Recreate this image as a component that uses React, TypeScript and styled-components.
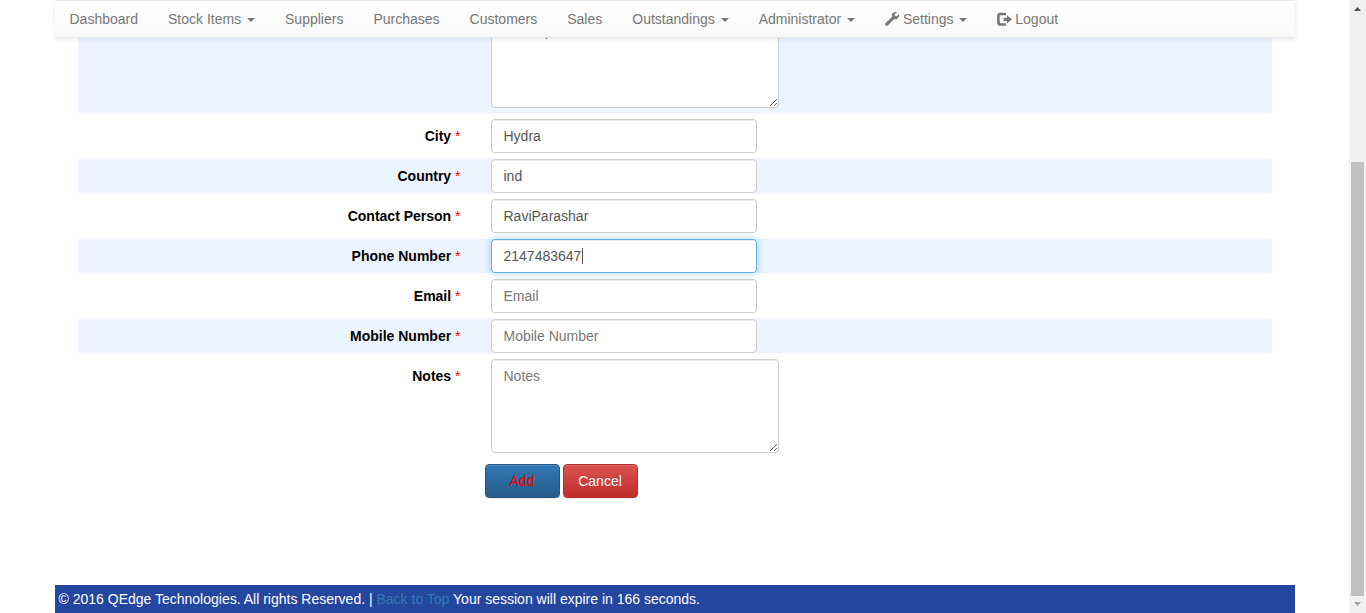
import React from "react";
import styled, { createGlobalStyle } from "styled-components";

const GlobalStyle = createGlobalStyle`
  *, *::before, *::after { box-sizing: border-box; }
  body {
    margin: 0;
    background: #fff;
    color: #000;
    font: 14px/20px "Liberation Sans", Arial, sans-serif;
  }
`;

const Shell = styled.div`
  display: flex;
  height: 100vh;
  overflow: hidden;
`;

const Viewport = styled.div`
  flex: 1;
  min-width: 0;
  overflow: hidden;
`;

const Page = styled.div`
  position: relative;
  display: flex;
  flex-direction: column;
  max-width: 1240px;
  min-height: 100%;
  margin: 0 auto;
`;

const NavBar = styled.nav`
  position: absolute;
  top: 0;
  left: 0;
  right: 0;
  z-index: 2;
  display: flex;
  border: solid #e7e7e7;
  border-width: 1px 0;
  background: linear-gradient(to bottom, #fff 0%, #f8f8f8 100%);
  box-shadow: 0 1px 5px rgba(0, 0, 0, 0.1);
`;

const NavLink = styled.a`
  height: 36px;
  padding: 8px 15px;
  color: #777;
  white-space: nowrap;
  text-decoration: none;
  &:hover { color: #333; }
`;

const Caret = styled.span`
  display: inline-block;
  margin-left: 2px;
  vertical-align: middle;
  border-top: 4px solid currentColor;
  border-right: 4px solid transparent;
  border-left: 4px solid transparent;
`;

const Glyph = styled.svg`
  width: 14px;
  height: 14px;
  overflow: visible;
  vertical-align: -2px;
  fill: currentColor;
`;

const Form = styled.form`
  display: flex;
  flex: 1;
  flex-direction: column;
  gap: 6px;
  padding: 14px 23px 87px;
`;

const Row = styled.div<{ $shaded?: boolean; $tall?: boolean }>`
  display: grid;
  grid-template-columns: 1fr 2fr;
  padding-bottom: ${(p) => (p.$tall ? "5px" : "0")};
  background: ${(p) => (p.$shaded ? "#ecf5ff" : "transparent")};
`;

const Label = styled.label`
  padding: 7px 15px 0 0;
  font-weight: bold;
  text-align: right;
`;

const Star = styled.span`
  color: #f00;
  font-weight: normal;
`;

const Cell = styled.div`
  position: relative;
  display: flex;
  grid-column: 2;
  padding-left: 15px;
`;

const Input = styled.input<{ $active?: boolean }>`
  width: 266px;
  height: 34px;
  padding: 6px 12px;
  border: 1px solid ${(p) => (p.$active ? "#66afe9" : "#ccc")};
  border-radius: 4px;
  outline: 0;
  background: #fff;
  color: #555;
  font: inherit;
  box-shadow: inset 0 1px 1px rgba(0, 0, 0, 0.075)
    ${(p) => (p.$active ? ", 0 0 8px rgba(102, 175, 233, 0.6)" : "")};
  &::placeholder { color: #777; }
`;

const TextArea = styled.textarea`
  width: 288px;
  height: 94px;
  padding: 6px 12px;
  border: 1px solid #ccc;
  border-radius: 4px;
  outline: 0;
  background: #fff;
  color: #555;
  font: inherit;
  box-shadow: inset 0 1px 1px rgba(0, 0, 0, 0.075);
  &::placeholder { color: #777; }
`;

const TextCursor = styled.span`
  position: absolute;
  top: 9px;
  left: 106px;
  width: 1px;
  height: 16px;
  background: #555;
`;

const Actions = styled.div`
  display: flex;
  grid-column: 2;
  gap: 3px;
  padding-left: 9px;
`;

const Button = styled.button<{ $danger?: boolean }>`
  width: 75px;
  height: 34px;
  padding: 0;
  border: 1px solid ${(p) => (p.$danger ? "#b92c28" : "#245580")};
  border-radius: 4px;
  background: ${(p) =>
    p.$danger
      ? "linear-gradient(to bottom, #d9534f 0%, #c12e2a 100%)"
      : "linear-gradient(to bottom, #337ab7 0%, #265a88 100%)"};
  color: ${(p) => (p.$danger ? "#fff" : "#f00")};
  font: inherit;
  text-shadow: 0 -1px 0 rgba(0, 0, 0, 0.2);
  box-shadow: inset 0 1px 0 rgba(255, 255, 255, 0.15), 0 1px 1px rgba(0, 0, 0, 0.075);
  cursor: pointer;
`;

const Footer = styled.footer`
  padding: 4px;
  background: #24469f;
  color: #fff;
`;

const FooterLink = styled.a`
  color: #337ab7;
  text-decoration: none;
`;

const Track = styled.div`
  display: flex;
  flex: none;
  flex-direction: column;
  align-items: center;
  width: 17px;
  background: #f1f1f1;
`;

const Arrow = styled.svg<{ $dim?: boolean }>`
  flex: none;
  width: 17px;
  height: 17px;
  fill: ${(p) => (p.$dim ? "#a3a3a3" : "#505050")};
`;

const ThumbSpace = styled.div`
  display: flex;
  flex: 1;
  align-items: flex-end;
`;

const Thumb = styled.div`
  width: 13px;
  height: 75%;
  background: #c1c1c1;
`;

const Wrench = () => (
  <Glyph viewBox="0 0 14 14" aria-hidden="true">
    <path d="M12.300.1 9.700 2.300 10 4 11.700 4.300 14 2C14.400 3.900 13.600 5.800 12.200 6.700 11.200 7.300 10.200 7.300 9.200 7L3 13.300C2.300 14 1.300 14 .7 13.400 0 12.700 0 11.700.7 11L7 4.900C6.600 3.300 7.100 1.700 8.400.7 9.600-.1 11-.3 12.300.1Z" />
  </Glyph>
);

const LogoutGlyph = () => (
  <Glyph viewBox="0 0 14 14" aria-hidden="true">
    <path d="M9 .8v2.500H3.700Q2.700 3.300 2.700 4.300v6Q2.700 11.300 3.700 11.300H9v2.500H3.500Q.1 13.800.1 10.400V4.200Q.1.800 3.500.8Z" />
    <path d="M10 3.200 15 7.300 10 11.400V8.900H6.600V5.700H10Z" />
  </Glyph>
);

type NavItem = { text: string; menu?: boolean; icon?: React.ReactNode };

const navItems: NavItem[] = [
  { text: "Dashboard" },
  { text: "Stock Items", menu: true },
  { text: "Suppliers" },
  { text: "Purchases" },
  { text: "Customers" },
  { text: "Sales" },
  { text: "Outstandings", menu: true },
  { text: "Administrator", menu: true },
  { text: "Settings", menu: true, icon: <Wrench /> },
  { text: "Logout", icon: <LogoutGlyph /> },
];

type Field = {
  id: string;
  label?: string;
  value?: string;
  multiline?: boolean;
  active?: boolean;
};

const fields: Field[] = [
  { id: "address", value: "Ameerpet", multiline: true },
  { id: "city", label: "City", value: "Hydra" },
  { id: "country", label: "Country", value: "ind" },
  { id: "contact", label: "Contact Person", value: "RaviParashar" },
  { id: "phone", label: "Phone Number", value: "2147483647", active: true },
  { id: "email", label: "Email" },
  { id: "mobile", label: "Mobile Number" },
  { id: "notes", label: "Notes", multiline: true },
];

export default function App() {
  return (
    <Shell>
      <GlobalStyle />
      <Viewport>
        <Page>
          <NavBar>
            {navItems.map((item) => (
              <NavLink href="#" key={item.text}>
                {item.icon}
                {item.icon && " "}
                {item.text}
                {item.menu && " "}
                {item.menu && <Caret />}
              </NavLink>
            ))}
          </NavBar>
          <Form onSubmit={(e) => e.preventDefault()}>
            {fields.map((f, i) => (
              <Row key={f.id} $shaded={i % 2 === 0} $tall={f.multiline}>
                {f.label && (
                  <Label htmlFor={f.id}>
                    {f.label} <Star>*</Star>
                  </Label>
                )}
                <Cell>
                  {f.multiline ? (
                    <TextArea
                      id={f.id}
                      aria-label={f.label ? undefined : f.id}
                      defaultValue={f.value}
                      placeholder={f.label}
                    />
                  ) : (
                    <Input
                      id={f.id}
                      defaultValue={f.value}
                      placeholder={f.label}
                      $active={f.active}
                    />
                  )}
                  {f.active && <TextCursor />}
                </Cell>
              </Row>
            ))}
            <Row>
              <Actions>
                <Button type="submit">Add</Button>
                <Button type="button" $danger>Cancel</Button>
              </Actions>
            </Row>
          </Form>
          <Footer>
            © 2016 QEdge Technologies. All rights Reserved. |{" "}
            <FooterLink href="#">Back to Top</FooterLink> Your session will expire in 166 seconds.
          </Footer>
        </Page>
      </Viewport>
      <Track aria-hidden="true">
        <Arrow viewBox="0 0 17 17"><path d="M5 11 8.500 7 12 11Z" /></Arrow>
        <ThumbSpace><Thumb /></ThumbSpace>
        <Arrow viewBox="0 0 17 17" $dim><path d="M5 6 8.500 10 12 6Z" /></Arrow>
      </Track>
    </Shell>
  );
}
